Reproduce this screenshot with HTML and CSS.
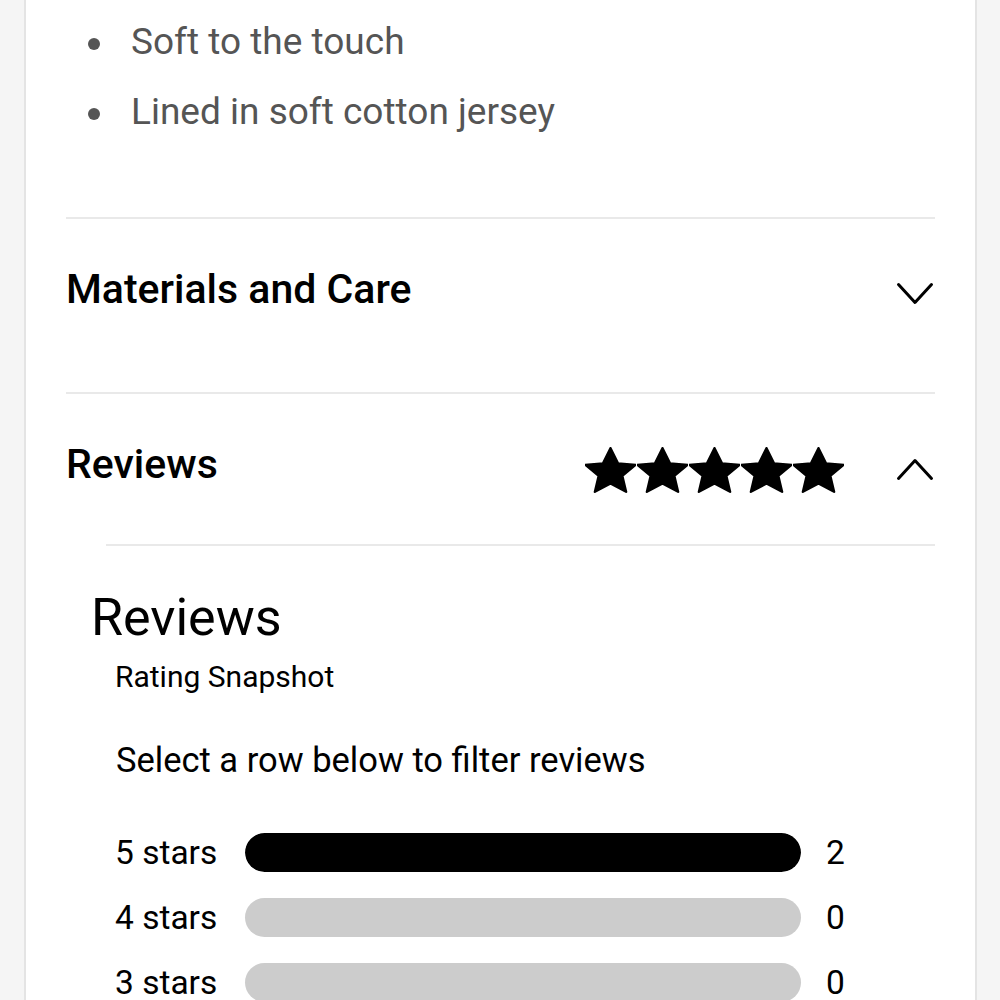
FILE: index.html
```html
<!DOCTYPE html>
<html>
<head>
<meta charset="utf-8">
<link rel="stylesheet" href="styles.css">
</head>
<body>
<div class="page">
  <ul class="features">
    <li>Soft to the touch</li>
    <li>Lined in soft cotton jersey</li>
  </ul>
  <div class="acc-row materials">
    <span class="acc-title">Materials and Care</span>
    <svg class="chev" width="40" height="24" viewBox="0 0 40 24"><path d="M3.5 2.5 L20 20.5 L36.5 2.5" fill="none" stroke="#000" stroke-width="3" stroke-linecap="round" stroke-linejoin="round"/></svg>
  </div>
  <div class="acc-row reviews-head">
    <span class="acc-title">Reviews</span>
    <div class="right">
      <div class="stars">
        <svg viewBox="1.4 1.3 21.2 20.9" preserveAspectRatio="none" class="star"><path d="M12 1.8l3.1 6.9 7.4.7-5.6 5 1.6 7.3L12 17.9l-6.5 3.8 1.6-7.3-5.6-5 7.4-.7z" fill="#000" stroke="#000" stroke-width="1" stroke-linejoin="round"/></svg>
        <svg viewBox="1.4 1.3 21.2 20.9" preserveAspectRatio="none" class="star"><path d="M12 1.8l3.1 6.9 7.4.7-5.6 5 1.6 7.3L12 17.9l-6.5 3.8 1.6-7.3-5.6-5 7.4-.7z" fill="#000" stroke="#000" stroke-width="1" stroke-linejoin="round"/></svg>
        <svg viewBox="1.4 1.3 21.2 20.9" preserveAspectRatio="none" class="star"><path d="M12 1.8l3.1 6.9 7.4.7-5.6 5 1.6 7.3L12 17.9l-6.5 3.8 1.6-7.3-5.6-5 7.4-.7z" fill="#000" stroke="#000" stroke-width="1" stroke-linejoin="round"/></svg>
        <svg viewBox="1.4 1.3 21.2 20.9" preserveAspectRatio="none" class="star"><path d="M12 1.8l3.1 6.9 7.4.7-5.6 5 1.6 7.3L12 17.9l-6.5 3.8 1.6-7.3-5.6-5 7.4-.7z" fill="#000" stroke="#000" stroke-width="1" stroke-linejoin="round"/></svg>
        <svg viewBox="1.4 1.3 21.2 20.9" preserveAspectRatio="none" class="star"><path d="M12 1.8l3.1 6.9 7.4.7-5.6 5 1.6 7.3L12 17.9l-6.5 3.8 1.6-7.3-5.6-5 7.4-.7z" fill="#000" stroke="#000" stroke-width="1" stroke-linejoin="round"/></svg>
      </div>
      <svg class="chev" width="40" height="24" viewBox="0 0 40 24"><path d="M3.5 21.5 L20 3.5 L36.5 21.5" fill="none" stroke="#000" stroke-width="3" stroke-linecap="round" stroke-linejoin="round"/></svg>
    </div>
  </div>
  <div class="review-body">
    <h2 class="rv-title">Reviews</h2>
    <div class="snapshot">Rating Snapshot</div>
    <div class="hint">Select a row below to filter reviews</div>
    <div class="dist">
      <div class="dist-row"><span class="lbl">5 stars</span><div class="track"><div class="fill" style="width:100%"></div></div><span class="cnt">2</span></div>
      <div class="dist-row"><span class="lbl">4 stars</span><div class="track"><div class="fill" style="width:0%"></div></div><span class="cnt">0</span></div>
      <div class="dist-row"><span class="lbl">3 stars</span><div class="track"><div class="fill" style="width:0%"></div></div><span class="cnt">0</span></div>
    </div>
  </div>
</div>
</body>
</html>
```
FILE: styles.css
```css
html, body {
  margin: 0;
  padding: 0;
  background: #f5f5f5;
}
body {
  font-family: Roboto, "Liberation Sans", sans-serif;
  color: #000;
}
.page {
  margin: 0 23px 0 24px;
  background: #fff;
  border-left: 2px solid #e4e4e4;
  border-right: 2px solid #e4e4e4;
  height: 1000px;
  overflow: hidden;
  padding: 0 40px;
}
.features {
  list-style: none;
  margin: 0;
  padding: 7px 0 70px 22px;
  color: #555;
  font-size: 37px;
  line-height: 70px;
  border-bottom: 2px solid #e9e9e9;
}
.features li {
  display: flex;
  align-items: center;
}
.features li::before {
  content: "";
  width: 12px;
  height: 12px;
  border-radius: 50%;
  background: #555;
  margin: 3px 31px 0 0;
  flex: none;
}
.acc-row {
  display: flex;
  align-items: flex-start;
  justify-content: space-between;
  padding-top: 46px;
  box-sizing: border-box;
}
.acc-title {
  font-size: 41px;
  font-weight: 500;
  line-height: 48px;
}
.materials {
  height: 175px;
  border-bottom: 2px solid #e9e9e9;
}
.reviews-head {
  height: 150px;
}
.right {
  display: flex;
  align-items: flex-start;
  gap: 51px;
}
.stars {
  display: flex;
  gap: 1px;
  margin-top: 7px;
}
.star {
  width: 51px;
  height: 46px;
  display: block;
}
.chev {
  display: block;
  margin-top: 17px;
}
.review-body {
  margin-left: 40px;
  border-top: 2px solid #e9e9e9;
}
.rv-title {
  margin: 42px 0 0 -15px;
  font-size: 52px;
  font-weight: 400;
  line-height: 60px;
}
.snapshot {
  margin-top: 9px;
  margin-left: 9px;
  font-size: 30px;
  line-height: 40px;
}
.hint {
  margin-top: 43px;
  margin-left: 10px;
  font-size: 34.5px;
  line-height: 40px;
}
.dist {
  margin-top: 53px;
  margin-left: 9px;
  display: flex;
  flex-direction: column;
  gap: 26px;
}
.dist-row {
  display: flex;
  align-items: center;
  height: 39px;
}
.lbl {
  width: 130px;
  font-size: 33.5px;
}
.track {
  width: 556px;
  height: 39px;
  border-radius: 20px;
  background: #cccccc;
  overflow: hidden;
}
.fill {
  height: 100%;
  background: #000;
  border-radius: 20px;
}
.cnt {
  margin-left: 25px;
  font-size: 33.5px;
}
```
